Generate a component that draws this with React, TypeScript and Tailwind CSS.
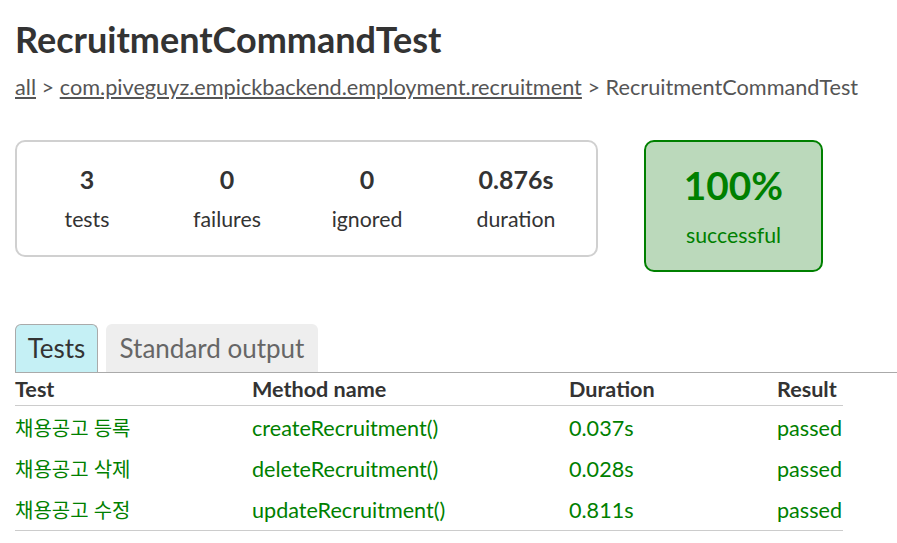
const font = { fontFamily: '"Lato", "Noto Sans CJK KR", sans-serif' };

const rows = [
  { test: "채용공고 등록", method: "createRecruitment()", duration: "0.037s", result: "passed" },
  { test: "채용공고 삭제", method: "deleteRecruitment()", duration: "0.028s", result: "passed" },
  { test: "채용공고 수정", method: "updateRecruitment()", duration: "0.811s", result: "passed" },
];

const stats = [
  { value: "3", label: "tests", w: "w-[140px]" },
  { value: "0", label: "failures", w: "w-[140px]" },
  { value: "0", label: "ignored", w: "w-[140px]" },
  { value: "0.876s", label: "duration", w: "w-[158px]" },
];

export default function App() {
  return (
    <div className="min-h-screen bg-white px-[15px] text-[#333]" style={font}>
      <h1 className="pt-[17px] text-[36px] font-bold leading-[44px]">RecruitmentCommandTest</h1>
      <div className="mt-[12px] text-[21.7px] leading-[28px] text-[#555]">
        <span className="underline">all</span> &gt;{" "}
        <span className="underline">com.piveguyz.empickbackend.employment.recruitment</span> &gt;
        RecruitmentCommandTest
      </div>

      <div className="mt-[39px] flex items-start gap-[46px]">
        <div className="flex h-[117px] w-[583px] items-center rounded-[10px] border-2 border-[#d0d0d0]">
          {stats.map((s) => (
            <div key={s.label} className={`${s.w} text-center`}>
              <div className="text-[25px] font-bold leading-[30px]">{s.value}</div>
              <div className="mt-[11px] text-[21.3px] leading-[28px]">{s.label}</div>
            </div>
          ))}
        </div>
        <div className="flex h-[132px] w-[179px] flex-col items-center justify-center rounded-[10px] border-2 border-[#008000] bg-[#bbd9bb] text-[#008000]">
          <div className="text-[38.8px] font-bold leading-[44px]">100%</div>
          <div className="mt-[14px] text-[21.3px] leading-[28px]">successful</div>
        </div>
      </div>

      <div className="mr-[-15px] mt-[52px] flex items-end gap-[8px] border-b border-[#aaa]">
        <div className="flex h-[48px] w-[83px] items-center justify-center rounded-t-[6px] border border-b-0 border-[#aaa] bg-[#c5f0f5] text-[26px]">
          Tests
        </div>
        <div className="flex h-[48px] w-[212px] items-center justify-center rounded-t-[6px] bg-[#eee] text-[26px] text-[#666]">
          Standard output
        </div>
      </div>

      <table className="w-[828px] border-collapse text-left text-[21.6px]">
        <thead>
          <tr className="border-b border-[#ccc]">
            <th className="w-[237px] py-[3px] font-bold leading-[26px]">Test</th>
            <th className="w-[317px] py-[3px] font-bold leading-[26px]">Method name</th>
            <th className="w-[208px] py-[3px] font-bold leading-[26px]">Duration</th>
            <th className="py-[3px] font-bold leading-[26px]">Result</th>
          </tr>
        </thead>
        <tbody className="border-b border-[#ccc] text-[#008000]">
          {rows.map((r) => (
            <tr key={r.method}>
              <td className="h-[41.5px] pt-[2px] text-[20px] leading-[26px]">{r.test}</td>
              <td className="h-[41.5px] pt-[2px] leading-[26px]">{r.method}</td>
              <td className="h-[41.5px] pt-[2px] leading-[26px]">{r.duration}</td>
              <td className="h-[41.5px] pt-[2px] leading-[26px]">{r.result}</td>
            </tr>
          ))}
        </tbody>
      </table>
    </div>
  );
}
